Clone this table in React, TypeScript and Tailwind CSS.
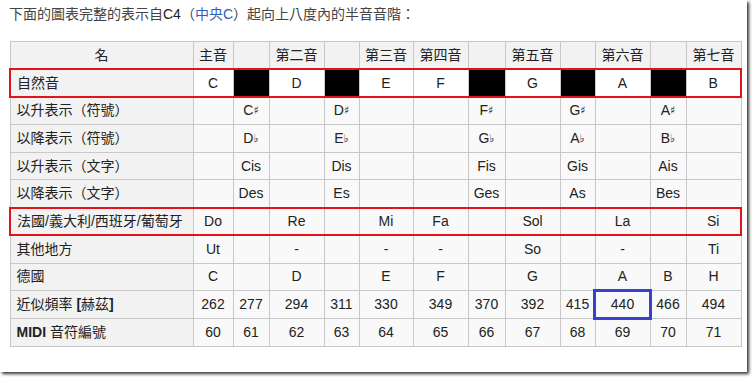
const FONT = { fontFamily: '"Liberation Sans", Arial, "Noto Sans CJK TC", sans-serif' };

type Cell = string | { sym: string; acc: string } | "BLACK";

type Row = {
  label: React.ReactNode;
  cells: Cell[];
  box?: boolean;
  white?: boolean;
};

const sharp = (n: string): Cell => ({ sym: n, acc: "♯" });
const flat = (n: string): Cell => ({ sym: n, acc: "♭" });

const B: Cell = "BLACK";

const header = ["主音", "", "第二音", "", "第三音", "第四音", "", "第五音", "", "第六音", "", "第七音"];
const colWidths = [40, 36, 55, 35, 54, 55, 37, 55, 35, 55, 36, 55];

const rows: Row[] = [
  { label: "自然音", cells: ["C", B, "D", B, "E", "F", B, "G", B, "A", B, "B"], box: true, white: true },
  { label: "以升表示（符號）", cells: ["", sharp("C"), "", sharp("D"), "", "", sharp("F"), "", sharp("G"), "", sharp("A"), ""] },
  { label: "以降表示（符號）", cells: ["", flat("D"), "", flat("E"), "", "", flat("G"), "", flat("A"), "", flat("B"), ""] },
  { label: "以升表示（文字）", cells: ["", "Cis", "", "Dis", "", "", "Fis", "", "Gis", "", "Ais", ""] },
  { label: "以降表示（文字）", cells: ["", "Des", "", "Es", "", "", "Ges", "", "As", "", "Bes", ""] },
  { label: "法國/義大利/西班牙/葡萄牙", cells: ["Do", "", "Re", "", "Mi", "Fa", "", "Sol", "", "La", "", "Si"], box: true },
  { label: "其他地方", cells: ["Ut", "", "-", "", "-", "-", "", "So", "", "-", "", "Ti"] },
  { label: "德國", cells: ["C", "", "D", "", "E", "F", "", "G", "", "A", "B", "H"] },
  {
    label: (
      <>
        近似頻率 <span className="font-bold">[</span>赫茲<span className="font-bold">]</span>
      </>
    ),
    cells: ["262", "277", "294", "311", "330", "349", "370", "392", "415", "440", "466", "494"],
  },
  {
    label: (
      <>
        <span className="font-bold">MIDI</span> 音符編號
      </>
    ),
    cells: ["60", "61", "62", "63", "64", "65", "66", "67", "68", "69", "70", "71"],
  },
];

const red = "border-y-2 border-y-[#e3131b]";

function renderCell(c: Cell) {
  if (c === "BLACK" || c === "") return null;
  if (typeof c === "string") return c;
  return (
    <>
      {c.sym}
      <span className="text-[11px] align-[1px]" style={{ fontFamily: '"DejaVu Sans", sans-serif' }}>
        {c.acc}
      </span>
    </>
  );
}

export default function App() {
  return (
    <div className="w-[752px] h-[378px] bg-white overflow-hidden" style={FONT}>
      <div className="w-[747px] h-[372px] bg-white shadow-[2px_2px_3px_rgba(0,0,0,0.8)] pl-[9px] pt-[4px]">
        <p className="text-[14px] leading-[20px] text-[#444]">
          下面的圖表完整的表示自<span className="text-[#222]">C4</span>（<span className="text-[#2f5fb8]">中央C</span>）起向上八度內的半音音階：
        </p>

        <table className="mt-[17px] table-fixed border-collapse w-[731px] text-[14px] text-[#222]">
          <colgroup>
            <col className="w-[183px]" />
            {colWidths.map((w, i) => (
              <col key={i} style={{ width: w }} />
            ))}
          </colgroup>
          <thead>
            <tr className="h-[27.7px]">
              <th className="border border-[#c8c8c8] bg-[#f2f2f2] font-normal p-0">名</th>
              {header.map((h, i) => (
                <th key={i} className="border border-[#c8c8c8] bg-[#f2f2f2] font-normal p-0">
                  {h}
                </th>
              ))}
            </tr>
          </thead>
          <tbody>
            {rows.map((r, ri) => (
              <tr key={ri} className="h-[27.7px]">
                <td
                  className={`border border-[#c8c8c8] bg-[#f2f2f2] pl-[6px] p-0 whitespace-nowrap ${
                    r.box ? `${red} border-l-2 border-l-[#e3131b]` : ""
                  }`}
                >
                  {r.label}
                </td>
                {r.cells.map((c, ci) => {
                  const last = ci === r.cells.length - 1;
                  const bg = c === "BLACK" ? "bg-black" : r.white ? "bg-white" : "bg-[#f9f9f9]";
                  const is440 = ri === 8 && ci === 9;
                  return (
                    <td
                      key={ci}
                      className={`border border-[#c8c8c8] ${bg} text-center p-0 ${r.box ? red : ""} ${
                        r.box && last ? "border-r-2 border-r-[#e3131b]" : ""
                      } ${is440 ? "outline-[3px] outline-solid outline-[#3b3fcf] -outline-offset-1" : ""}`}
                    >
                      {renderCell(c)}
                    </td>
                  );
                })}
              </tr>
            ))}
          </tbody>
        </table>
      </div>
    </div>
  );
}
